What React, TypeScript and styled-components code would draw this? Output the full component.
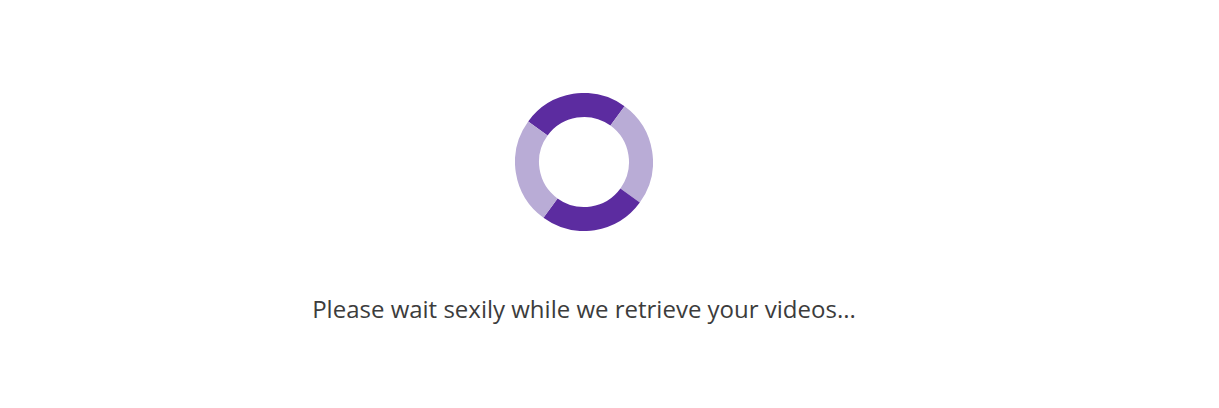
import styled, { createGlobalStyle } from 'styled-components';

const GlobalStyle = createGlobalStyle`
  html, body {
    margin: 0;
    padding: 0;
    background: #fff;
  }
`;

// four arcs, angles measured clockwise from 12 o'clock
const polar = (deg: number, r: number) => {
  const a = ((deg - 90) * Math.PI) / 180;
  return [69 + r * Math.cos(a), 69 + r * Math.sin(a)].map((n) => n.toFixed(2)).join(' ');
};

const arc = (from: number, to: number) =>
  `M${polar(from, 57)} A57 57 0 0 1 ${polar(to, 57)}`;

const segments = [
  { from: -54, to: 36, color: '#5c2ca0' },
  { from: 36, to: 126, color: '#b9acd6' },
  { from: 126, to: 216, color: '#5c2ca0' },
  { from: 216, to: 306, color: '#b9acd6' },
];

const Spinner = () => (
  <svg width="138" height="138" viewBox="0 0 138 138">
    {segments.map((s) => (
      <path key={s.from} d={arc(s.from, s.to)} fill="none" stroke={s.color} strokeWidth="24" />
    ))}
  </svg>
);

const App = () => (
  <>
    <GlobalStyle />
    <Page>
      <Spinner />
      <Message>Please wait sexily while we retrieve your videos...</Message>
    </Page>
  </>
);

const Page = styled.div`
  display: flex;
  flex-direction: column;
  align-items: center;
  width: 1168px;
  height: 408px;
  padding-top: 93px;
  box-sizing: border-box;
`;

const Message = styled.p`
  margin: 62px 0 0;
  color: #3c3c3c;
  font-family: 'Open Sans', sans-serif;
  font-size: 24px;
  line-height: 32px;
`;

export default App;
